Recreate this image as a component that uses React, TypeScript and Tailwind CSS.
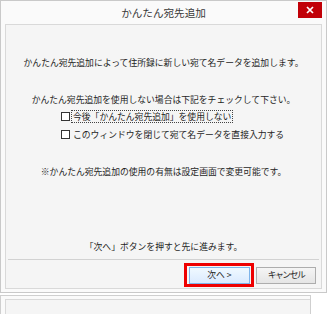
import React from 'react';

const jp = "font-['Noto_Sans_CJK_JP','Noto_Sans',sans-serif]";

function CheckRow({ label, focused }: { label: string; focused?: boolean }) {
  return (
    <div className="flex items-center h-[13px] pl-[55px]">
      <span className="w-[9px] h-[9px] border border-[#333] bg-white shrink-0" />
      <span
        className={`ml-[1px] px-[1px] leading-[11px] border ${
          focused ? 'border-dotted border-[#444]' : 'border-transparent'
        }`}
      >
        {label}
      </span>
    </div>
  );
}

export default function App() {
  return (
    <div className={`w-[328px] h-[314px] bg-white overflow-hidden text-[#1e1e1e] ${jp}`}>
      {/* dialog */}
      <div className="w-[327px] h-[293px] border border-[#c9c9c9] bg-neutral-50">
        <div className="h-[23px] grid grid-cols-[1fr_auto_1fr] items-start">
          <div />
          <div className="h-[23px] flex items-center text-[10.6px] text-[#3a3a3a]">かんたん宛先追加</div>
          <div className="flex justify-end pr-[4px] pt-[1px]">
            <div className="w-[24px] h-[16px] bg-red-700 flex items-center justify-center">
              <svg width="8" height="8" viewBox="0 0 8 8">
                <path d="M1 1L7 7M7 1L1 7" stroke="#ffffff" strokeWidth="1.7" />
              </svg>
            </div>
          </div>
        </div>

        {/* client area */}
        <div className="ml-[4px] w-[317px] h-[265px] border border-[#d9d9d9] bg-neutral-100 flex flex-col text-[8.8px]">
          <div className="h-[234px] flex flex-col">
            <p className="mt-[32px] leading-[12px] text-center">
              かんたん宛先追加によって住所録に新しい宛て名データを追加します。
            </p>
            <p className="mt-[25px] leading-[12px] text-center">
              かんたん宛先追加を使用しない場合は下記をチェックして下さい。
            </p>
            <div className="mt-[4px]">
              <CheckRow label="今後「かんたん宛先追加」を使用しない" focused />
            </div>
            <div className="mt-[5px]">
              <CheckRow label="このウィンドウを閉じて宛て名データを直接入力する" />
            </div>
            <p className="mt-[25px] leading-[12px] text-center">
              ※かんたん宛先追加の使用の有無は設定画面で変更可能です。
            </p>
            <p className="mt-[63px] leading-[12px] text-center">
              「次へ」ボタンを押すと先に進みます。
            </p>
          </div>
          <div className="mx-[2px] border-t border-[#d2d2d2]" />
          <div className="flex justify-end gap-[6px] pt-[7px] pr-[5px]">
            <div className="relative">
              <button className="w-[61px] h-[17px] border border-[#7eb4ea] bg-gradient-to-b from-sky-50 to-blue-100 flex items-center justify-center leading-none">
                次へ &gt;
              </button>
              <div className="absolute -left-[5px] -top-[4px] -right-[4px] -bottom-[3px] border-[3px] border-[#ee0000]" />
            </div>
            <button className="w-[60px] h-[17px] border border-[#adadad] bg-gradient-to-b from-neutral-100 to-neutral-200 flex items-center justify-center leading-none tracking-[-1.5px]">
              キャンセル
            </button>
          </div>
        </div>
      </div>

      {/* window behind */}
      <div className="mt-[2px] w-[311px] h-[21px] border-t border-r border-l border-[#cfcfcf] bg-neutral-50 pt-[3px] pl-[4px]">
        <div className="h-full border-t border-l border-[#d9d9d9] bg-neutral-100" />
      </div>
    </div>
  );
}
